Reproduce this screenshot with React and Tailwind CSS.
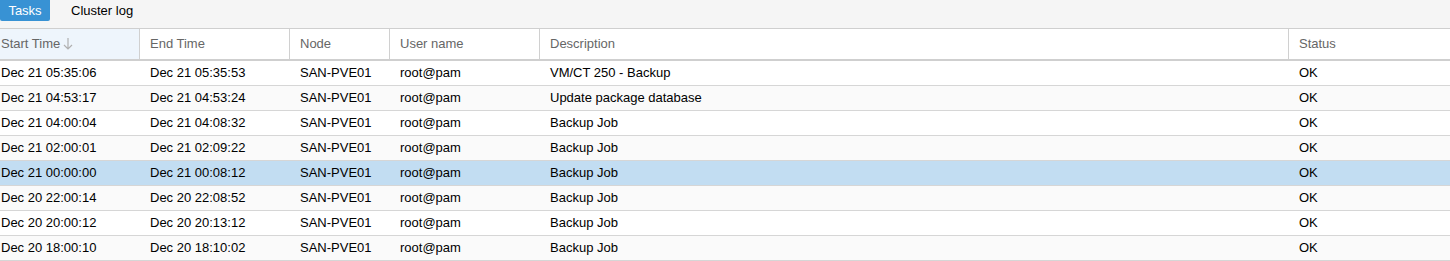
import React from 'react';

const columns = [
  { key: 'start', label: 'Start Time', width: 'w-[140px]', pad: 'pl-[1px]' },
  { key: 'end', label: 'End Time', width: 'w-[150px]', pad: 'pl-[10px]' },
  { key: 'node', label: 'Node', width: 'w-[100px]', pad: 'pl-[10px]' },
  { key: 'user', label: 'User name', width: 'w-[150px]', pad: 'pl-[10px]' },
  { key: 'desc', label: 'Description', width: 'w-[749px]', pad: 'pl-[10px]' },
  { key: 'status', label: 'Status', width: 'flex-1', pad: 'pl-[10px]' },
];

const rows = [
  ['Dec 21 05:35:06', 'Dec 21 05:35:53', 'VM/CT 250 - Backup'],
  ['Dec 21 04:53:17', 'Dec 21 04:53:24', 'Update package database'],
  ['Dec 21 04:00:04', 'Dec 21 04:08:32', 'Backup Job'],
  ['Dec 21 02:00:01', 'Dec 21 02:09:22', 'Backup Job'],
  ['Dec 21 00:00:00', 'Dec 21 00:08:12', 'Backup Job'],
  ['Dec 20 22:00:14', 'Dec 20 22:08:52', 'Backup Job'],
  ['Dec 20 20:00:12', 'Dec 20 20:13:12', 'Backup Job'],
  ['Dec 20 18:00:10', 'Dec 20 18:10:02', 'Backup Job'],
];

const SELECTED = 4;

export default function App() {
  return (
    <div className="w-[1450px] h-[261px] bg-white overflow-hidden text-[13px]" style={{ fontFamily: '"Liberation Sans", Arial, sans-serif' }}>
      {/* tab bar */}
      <div className="h-[29px] bg-[#f5f5f5] border-b border-[#cfcfcf] flex items-start">
        <div className="h-[21px] w-[50px] bg-[#3892d4] rounded-b-[2px] text-white flex items-center justify-center">
          Tasks
        </div>
        <div className="h-[21px] ml-[21px] flex items-center text-black">Cluster log</div>
      </div>

      {/* header */}
      <div className="flex h-[32px] border-b-2 border-[#cfcfcf] text-[#666]">
        {columns.map((c, i) => (
          <div
            key={c.key}
            className={`${c.width} ${c.pad} pb-[1px] shrink-0 flex items-center ${i < columns.length - 1 ? 'border-r border-[#d0d0d0]' : ''} ${i === 0 ? 'bg-[#eef5fc]' : ''}`}
          >
            {c.label}
            {i === 0 && (
              <svg width="10" height="14" viewBox="0 0 10 14" className="ml-[3px]" fill="none" stroke="#b0b0b0" strokeWidth="1.2">
                <path d="M5 1v11M1 8l4 4 4-4" />
              </svg>
            )}
          </div>
        ))}
      </div>

      {/* rows */}
      {rows.map((r, idx) => {
        const bg = idx === SELECTED ? 'bg-[#c2ddf2]' : idx % 2 === 1 ? 'bg-[#fafafa]' : 'bg-white';
        const vals = [r[0], r[1], 'SAN-PVE01', 'root@pam', r[2], 'OK'];
        return (
          <div key={idx} className={`flex h-[25px] border-b border-[#d6d6d6] text-black ${bg}`}>
            {columns.map((c, i) => (
              <div key={c.key} className={`${c.width} ${c.pad} shrink-0 flex items-center whitespace-nowrap`}>
                {vals[i]}
              </div>
            ))}
          </div>
        );
      })}
    </div>
  );
}
